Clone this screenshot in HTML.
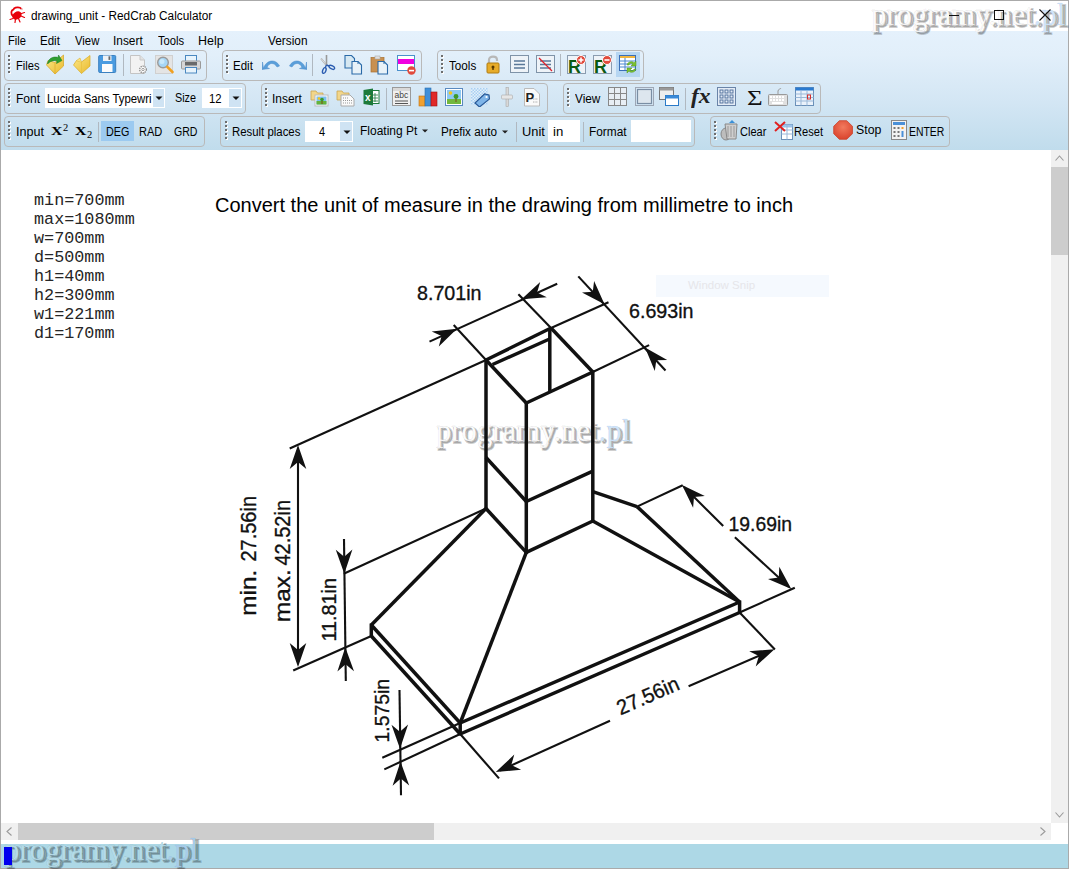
<!DOCTYPE html>
<html><head><meta charset="utf-8">
<style>
*{margin:0;padding:0;box-sizing:border-box}
html,body{width:1069px;height:869px;overflow:hidden;background:#fff;font-family:"Liberation Sans",sans-serif;color:#000}
.a{position:absolute}
#win{position:absolute;left:0;top:0;width:1069px;height:869px;border:1px solid #aaa;background:#fff}
#title{left:30px;top:9px;font-size:12.5px;color:#000;white-space:nowrap;transform:scaleX(0.95);transform-origin:0 0}
#tb{left:1px;top:31px;width:1067px;height:119px;background:linear-gradient(#e5f1fc,#e2effa 20%,#d3e6f4 60%,#c0dcec)}
.menu{top:34px;font-size:12px;white-space:nowrap;transform:scaleX(0.91);transform-origin:0 0}
.box{position:absolute;border:1px solid #b9b9b9;border-radius:4px}
.grip{position:absolute;width:2px;border-left:2px dotted #555;}
.lbl{position:absolute;font-size:12px;white-space:nowrap;color:#000}
.sep{position:absolute;width:1px;background:#b0b8c0}
.ico{position:absolute}
.input{position:absolute;background:#fff}
#content{left:1px;top:150px;width:1050px;height:673px;background:#fff}
.wm{position:absolute;font-family:"Liberation Serif",serif;font-weight:normal;white-space:nowrap;transform-origin:0 0;transform:scaleX(0.975);font-size:31.5px}
.wms{color:rgba(0,0,0,0.21);-webkit-text-stroke:1.8px rgba(0,0,0,0.21)}
.wms span{color:rgba(0,0,0,0.21);-webkit-text-stroke:1.8px rgba(0,0,0,0.21)}
.wmm{color:#fbfbfb;-webkit-text-stroke:0.4px rgba(0,0,0,0.12)}
.wmm span{-webkit-text-stroke:0.4px rgba(60,120,200,0.15)}
.wmm span{color:#d4e6f8}
.mono{color:#262626;font-family:"Liberation Mono",monospace;font-size:16.8px;line-height:18.95px;white-space:pre}
#status{left:1px;top:844px;width:1067px;height:24px;background:#add8e6}
</style></head><body>
<div id="win"></div>
<div class="a" id="tb"></div>

<div class="lbl" style="left:30.50px;top:9.00px;font-size:12.5px;font-family:'Liberation Sans';font-weight:normal;line-height:normal;transform:scaleX(0.9453);transform-origin:0 0;">drawing_unit - RedCrab Calculator</div>
<div class="lbl" style="left:7.77px;top:33.70px;font-size:12px;font-family:'Liberation Sans';font-weight:normal;line-height:normal;transform:scaleX(0.9278);transform-origin:0 0;">File</div>
<div class="lbl" style="left:39.74px;top:33.70px;font-size:12px;font-family:'Liberation Sans';font-weight:normal;line-height:normal;transform:scaleX(0.9600);transform-origin:0 0;">Edit</div>
<div class="lbl" style="left:74.60px;top:33.70px;font-size:12px;font-family:'Liberation Sans';font-weight:normal;line-height:normal;transform:scaleX(0.9423);transform-origin:0 0;">View</div>
<div class="lbl" style="left:112.81px;top:33.70px;font-size:12px;font-family:'Liberation Sans';font-weight:normal;line-height:normal;transform:scaleX(0.9897);transform-origin:0 0;">Insert</div>
<div class="lbl" style="left:157.50px;top:33.70px;font-size:12px;font-family:'Liberation Sans';font-weight:normal;line-height:normal;transform:scaleX(0.9357);transform-origin:0 0;">Tools</div>
<div class="lbl" style="left:197.66px;top:33.70px;font-size:12px;font-family:'Liberation Sans';font-weight:normal;line-height:normal;transform:scaleX(1.0391);transform-origin:0 0;">Help</div>
<div class="lbl" style="left:267.50px;top:33.70px;font-size:12px;font-family:'Liberation Sans';font-weight:normal;line-height:normal;transform:scaleX(0.9872);transform-origin:0 0;">Version</div>
<div class="box" style="left:4px;top:50px;width:203px;height:31px"></div>
<div class="box" style="left:222px;top:50px;width:200px;height:31px"></div>
<div class="box" style="left:437px;top:50px;width:207px;height:31px"></div>
<svg class="a" style="left:8px;top:55px" width="3" height="19" viewBox="0 0 3 19"><rect x="1" y="1" width="2" height="2" fill="#fff"/><rect x="0" y="0" width="2" height="2" fill="#6e6e6e"/><rect x="1" y="5" width="2" height="2" fill="#fff"/><rect x="0" y="4" width="2" height="2" fill="#6e6e6e"/><rect x="1" y="9" width="2" height="2" fill="#fff"/><rect x="0" y="8" width="2" height="2" fill="#6e6e6e"/><rect x="1" y="13" width="2" height="2" fill="#fff"/><rect x="0" y="12" width="2" height="2" fill="#6e6e6e"/><rect x="1" y="17" width="2" height="2" fill="#fff"/><rect x="0" y="16" width="2" height="2" fill="#6e6e6e"/></svg>
<div class="lbl" style="left:15.77px;top:58.90px;font-size:12px;font-family:'Liberation Sans';font-weight:normal;line-height:normal;transform:scaleX(0.9250);transform-origin:0 0;">Files</div>
<svg class="a" style="left:46px;top:54px" width="20" height="21" viewBox="0 0 20 21"><defs><linearGradient id="fy" x1="0" y1="0" x2="1" y2="1"><stop offset="0" stop-color="#fde98a"/><stop offset="1" stop-color="#e9b92c"/></linearGradient></defs><path d="M0.5 11 L9 20 L17.5 12 V1 L9 8.5 L2 6.5Z" fill="url(#fy)" stroke="#d4a21e" stroke-width="0.7"/><path d="M9 8.5 V20" stroke="#e0b030" stroke-width="0.8"/><path d="M1.5 10 C2 4 8 2 12 3.5 L12.5 1 L16 6.5 L10.5 9.5 L11 7 C8 6 4 7 1.5 10Z" fill="#2e9e32" stroke="#1d7a22" stroke-width="0.5"/></svg>
<svg class="a" style="left:73px;top:55px" width="18" height="19" viewBox="0 0 18 19"><path d="M0.5 10 L8.5 18.5 L17 11 V0.5 L8.5 7 L3.5 5.5Z" fill="url(#fy)" stroke="#d9ab22" stroke-width="0.7"/><path d="M8.5 7 V18.5" stroke="#e8c040" stroke-width="0.8"/><path d="M3.5 5.5 L7 3 L8.5 7" fill="#fbe27a" stroke="#d9ab22" stroke-width="0.5"/></svg>
<svg class="a" style="left:98px;top:55px" width="19" height="19" viewBox="0 0 19 19"><rect x="0.7" y="0.5" width="17" height="17" rx="1" fill="#4a9be0" stroke="#3a80c0"/><rect x="5" y="0.5" width="8.5" height="5.5" fill="#eef2f6"/><rect x="10.5" y="1.3" width="1.8" height="3.6" fill="#666"/><rect x="4" y="9" width="10.5" height="8" fill="#fbfbfb"/></svg>
<div class="sep" style="left:123px;top:54px;height:22px"></div>
<svg class="a" style="left:130px;top:55px" width="19" height="20" viewBox="0 0 19 20"><path d="M0.5 0.5 H10 L14.5 5 V18.5 H0.5Z" fill="#f2f2f2" stroke="#c4c4c4"/><path d="M10 0.5 V5 H14.5" fill="#e2e2e2" stroke="#c8c8c8"/><circle cx="13" cy="14.5" r="3.3" fill="#fff" stroke="#8a8a8a" stroke-width="1.3" stroke-dasharray="1.3 0.8"/><circle cx="13" cy="14.5" r="1.2" fill="none" stroke="#888" stroke-width="0.8"/></svg>
<svg class="a" style="left:155px;top:55px" width="20" height="20" viewBox="0 0 20 20"><rect x="0.5" y="0.5" width="17" height="18" fill="#e4e4e4" stroke="#d0d0d0"/><circle cx="8" cy="7.5" r="5.3" fill="#a6d6f6" stroke="#9a9a9a" stroke-width="1.4"/><circle cx="7" cy="6.5" r="2.5" fill="#c8e8fb"/><path d="M12.3 11.8 L17.5 17" stroke="#f0a020" stroke-width="2.6" stroke-linecap="round"/></svg>
<svg class="a" style="left:181px;top:55px" width="20" height="19" viewBox="0 0 20 19"><rect x="4.5" y="0.5" width="11" height="6" fill="#e8f4fc" stroke="#4a88c0"/><rect x="0.5" y="6" width="19" height="8" rx="1" fill="#d6d6d6" stroke="#9a9a9a"/><rect x="4" y="7" width="12" height="3.5" fill="#6a6a6a"/><rect x="4.5" y="12.5" width="11" height="5.5" fill="#e8f4fc" stroke="#4a88c0"/></svg>
<svg class="a" style="left:226px;top:55px" width="3" height="19" viewBox="0 0 3 19"><rect x="1" y="1" width="2" height="2" fill="#fff"/><rect x="0" y="0" width="2" height="2" fill="#6e6e6e"/><rect x="1" y="5" width="2" height="2" fill="#fff"/><rect x="0" y="4" width="2" height="2" fill="#6e6e6e"/><rect x="1" y="9" width="2" height="2" fill="#fff"/><rect x="0" y="8" width="2" height="2" fill="#6e6e6e"/><rect x="1" y="13" width="2" height="2" fill="#fff"/><rect x="0" y="12" width="2" height="2" fill="#6e6e6e"/><rect x="1" y="17" width="2" height="2" fill="#fff"/><rect x="0" y="16" width="2" height="2" fill="#6e6e6e"/></svg>
<div class="lbl" style="left:233.24px;top:58.90px;font-size:12px;font-family:'Liberation Sans';font-weight:normal;line-height:normal;transform:scaleX(0.9600);transform-origin:0 0;">Edit</div>
<svg class="a" style="left:262px;top:58px" width="19" height="12" viewBox="0 0 19 12"><path d="M1.5 10.5 C4 1.5 14 0.5 17.5 8 L15 9 C12 4 7 4.5 5 9.5 L7.5 10.5 L0 11.5 L0.5 4Z" fill="#5a9fda" stroke="#4a88c8" stroke-width="0.5"/></svg>
<svg class="a" style="left:288px;top:58px" width="19" height="12" viewBox="0 0 19 12"><path d="M17.5 10.5 C15 1.5 5 0.5 1.5 8 L4 9 C7 4 12 4.5 14 9.5 L11.5 10.5 L19 11.5 L18.5 4Z" fill="#5a9fda" stroke="#4a88c8" stroke-width="0.5"/></svg>
<div class="sep" style="left:312px;top:54px;height:22px"></div>
<svg class="a" style="left:319px;top:55px" width="17" height="20" viewBox="0 0 17 20"><path d="M2 3.5 L7.5 10.2" stroke="#aaa" stroke-width="1.8"/><path d="M2 3.5 L7.5 10.2" stroke="#fff" stroke-width="0.6"/><path d="M7.5 0 V10.5" stroke="#999" stroke-width="1.6"/><path d="M7.5 10 L6 13" stroke="#2a5cb0" stroke-width="1.4"/><ellipse cx="5.3" cy="15.5" rx="1.6" ry="3" transform="rotate(20 5.3 15.5)" fill="none" stroke="#2a5cb0" stroke-width="1.4"/><path d="M7.5 10 L10 11" stroke="#2a5cb0" stroke-width="1.4"/><ellipse cx="12.8" cy="12.3" rx="3" ry="1.6" transform="rotate(28 12.8 12.3)" fill="none" stroke="#2a5cb0" stroke-width="1.4"/></svg>
<svg class="a" style="left:344px;top:55px" width="20" height="20" viewBox="0 0 20 20"><path d="M1 0.5 H7.5 L10.5 3.5 V13 H1Z" fill="#d6e8f2" stroke="#2a6aa8" stroke-width="1.1"/><path d="M8 6.5 H14 L17.5 10 V19 H8Z" fill="#e8f2f8" stroke="#2a6aa8" stroke-width="1.1"/><path d="M14 6.5 V9" stroke="#2a6aa8"/></svg>
<svg class="a" style="left:370px;top:55px" width="21" height="20" viewBox="0 0 21 20"><rect x="1" y="2.5" width="13" height="14.5" fill="#c89050" stroke="#a87030" stroke-width="0.7"/><rect x="5" y="1" width="5" height="3" fill="#e0e0e0" stroke="#aaa" stroke-width="0.6"/><path d="M8 6.5 H14 L17.5 10 V19 H8Z" fill="#e8f2f8" stroke="#2a6aa8" stroke-width="1.1"/><path d="M14 6.5 V9" stroke="#2a6aa8"/></svg>
<svg class="a" style="left:397px;top:55px" width="20" height="21" viewBox="0 0 20 21"><rect x="0.5" y="0.5" width="17" height="15" fill="#fff" stroke="#4a90cc"/><rect x="1" y="4" width="16" height="5" fill="#f000e0"/><circle cx="14.5" cy="15.5" r="4.2" fill="#e14a3c"/><rect x="12" y="14.8" width="5" height="1.6" fill="#fff"/></svg>
<svg class="a" style="left:441px;top:55px" width="3" height="19" viewBox="0 0 3 19"><rect x="1" y="1" width="2" height="2" fill="#fff"/><rect x="0" y="0" width="2" height="2" fill="#6e6e6e"/><rect x="1" y="5" width="2" height="2" fill="#fff"/><rect x="0" y="4" width="2" height="2" fill="#6e6e6e"/><rect x="1" y="9" width="2" height="2" fill="#fff"/><rect x="0" y="8" width="2" height="2" fill="#6e6e6e"/><rect x="1" y="13" width="2" height="2" fill="#fff"/><rect x="0" y="12" width="2" height="2" fill="#6e6e6e"/><rect x="1" y="17" width="2" height="2" fill="#fff"/><rect x="0" y="16" width="2" height="2" fill="#6e6e6e"/></svg>
<div class="lbl" style="left:449.00px;top:59.10px;font-size:12px;font-family:'Liberation Sans';font-weight:normal;line-height:normal;transform:scaleX(0.9750);transform-origin:0 0;">Tools</div>
<svg class="a" style="left:486px;top:55px" width="14" height="19" viewBox="0 0 14 19"><path d="M3 8.5 V5 C3 0.5 11 0.5 11 5 V6" fill="none" stroke="#b8b8b8" stroke-width="2.2"/><rect x="1" y="8" width="12" height="10" rx="1" fill="#e7ac2a" stroke="#b07d12"/><circle cx="7" cy="12" r="1.5" fill="#5a3a00"/><rect x="6.3" y="12" width="1.4" height="3" fill="#5a3a00"/></svg>
<svg class="a" style="left:510px;top:55px" width="20" height="19" viewBox="0 0 20 19"><rect x="0.5" y="0.5" width="18" height="17" fill="#eef3f8" stroke="#7f93a8"/><path d="M4 6 H15 M4 9.5 H15 M4 13 H15" stroke="#5a7898" stroke-width="1.5"/></svg>
<svg class="a" style="left:536px;top:55px" width="20" height="19" viewBox="0 0 20 19"><rect x="0.5" y="0.5" width="18" height="17" fill="#eef3f8" stroke="#7f93a8"/><path d="M4 6 H15 M4 9.5 H15 M4 13 H15" stroke="#5a7898" stroke-width="1.5"/><path d="M3 3 L16 16" stroke="#e0202a" stroke-width="1.3"/></svg>
<div class="sep" style="left:560px;top:54px;height:22px"></div>
<svg class="a" style="left:567px;top:55px" width="19" height="19" viewBox="0 0 19 19"><rect x="0.5" y="0.5" width="18" height="18" fill="#eef3f8" stroke="#8a9cb0"/><text x="1" y="17.5" font-family="Liberation Sans" font-weight="bold" font-size="18" fill="#0b5a12">R</text><circle cx="14" cy="5" r="4.5" fill="#e14a3c" stroke="#fff"/><path d="M14 2.5 V7.5 M11.5 5 H16.5" stroke="#fff" stroke-width="1.6"/></svg>
<svg class="a" style="left:593px;top:55px" width="19" height="19" viewBox="0 0 19 19"><rect x="0.5" y="0.5" width="18" height="18" fill="#eef3f8" stroke="#8a9cb0"/><text x="1" y="17.5" font-family="Liberation Sans" font-weight="bold" font-size="18" fill="#0b5a12">R</text><circle cx="14" cy="5" r="4.5" fill="#e14a3c" stroke="#fff"/><path d="M11.5 5 H16.5" stroke="#fff" stroke-width="1.6"/></svg>
<div class="a" style="left:616px;top:52px;width:24px;height:25px;background:#b6d6f2"></div>
<svg class="a" style="left:619px;top:55px" width="19" height="20" viewBox="0 0 19 20"><rect x="0.5" y="0.5" width="16" height="15" fill="#fff" stroke="#3a6fb8"/><rect x="1" y="1" width="15" height="2" fill="#f2b640"/><path d="M1 6 H16 M1 9 H16 M1 12 H16 M6 3 V15" stroke="#4b86cf" stroke-width="1"/><path d="M8 10 C9 6 14 6 15 8 L17 6 V11 H12 L14 9 C13 8 10 8 10 10Z M17 14 C16 18 11 18 10 16 L8 18 V13 H13 L11 15 C12 16 15 16 15 14Z" fill="#7cc230" stroke="#4e9418" stroke-width="0.5"/></svg>
<div class="box" style="left:4px;top:83px;width:242px;height:31px"></div>
<div class="box" style="left:261px;top:83px;width:287px;height:31px"></div>
<div class="box" style="left:563px;top:83px;width:258px;height:31px"></div>
<svg class="a" style="left:8px;top:88px" width="3" height="19" viewBox="0 0 3 19"><rect x="1" y="1" width="2" height="2" fill="#fff"/><rect x="0" y="0" width="2" height="2" fill="#6e6e6e"/><rect x="1" y="5" width="2" height="2" fill="#fff"/><rect x="0" y="4" width="2" height="2" fill="#6e6e6e"/><rect x="1" y="9" width="2" height="2" fill="#fff"/><rect x="0" y="8" width="2" height="2" fill="#6e6e6e"/><rect x="1" y="13" width="2" height="2" fill="#fff"/><rect x="0" y="12" width="2" height="2" fill="#6e6e6e"/><rect x="1" y="17" width="2" height="2" fill="#fff"/><rect x="0" y="16" width="2" height="2" fill="#6e6e6e"/></svg>
<div class="lbl" style="left:15.70px;top:91.60px;font-size:12px;font-family:'Liberation Sans';font-weight:normal;line-height:normal;transform:scaleX(1.0043);transform-origin:0 0;">Font</div>
<div class="input" style="left:45px;top:88px;width:108px;height:20px"></div>
<div class="lbl" style="left:46.75px;top:92.10px;font-size:12px;font-family:'Liberation Sans';font-weight:normal;line-height:normal;transform:scaleX(0.9468);transform-origin:0 0;">Lucida Sans Typewri</div>
<div class="a" style="left:153px;top:88px;width:12px;height:20px;background:#cfe3f3;border:1px solid #fff;border-left:none"></div>
<svg class="a" style="left:155.0px;top:96.0px" width="8" height="4" viewBox="0 0 8 4"><path d="M0.5 0.5H7.5L4 4Z" fill="#111"/></svg>
<div class="lbl" style="left:175.10px;top:90.50px;font-size:12px;font-family:'Liberation Sans';font-weight:normal;line-height:normal;transform:scaleX(0.9000);transform-origin:0 0;">Size</div>
<div class="input" style="left:202px;top:88px;width:28px;height:20px"></div>
<div class="lbl" style="left:209.46px;top:92.00px;font-size:12px;font-family:'Liberation Sans';font-weight:normal;line-height:normal;transform:scaleX(0.9417);transform-origin:0 0;">12</div>
<div class="a" style="left:229px;top:88px;width:13px;height:20px;background:#cfe3f3;border:1px solid #fff;border-left:none"></div>
<svg class="a" style="left:231.5px;top:96.0px" width="8" height="4" viewBox="0 0 8 4"><path d="M0.5 0.5H7.5L4 4Z" fill="#111"/></svg>
<svg class="a" style="left:265px;top:88px" width="3" height="19" viewBox="0 0 3 19"><rect x="1" y="1" width="2" height="2" fill="#fff"/><rect x="0" y="0" width="2" height="2" fill="#6e6e6e"/><rect x="1" y="5" width="2" height="2" fill="#fff"/><rect x="0" y="4" width="2" height="2" fill="#6e6e6e"/><rect x="1" y="9" width="2" height="2" fill="#fff"/><rect x="0" y="8" width="2" height="2" fill="#6e6e6e"/><rect x="1" y="13" width="2" height="2" fill="#fff"/><rect x="0" y="12" width="2" height="2" fill="#6e6e6e"/><rect x="1" y="17" width="2" height="2" fill="#fff"/><rect x="0" y="16" width="2" height="2" fill="#6e6e6e"/></svg>
<div class="lbl" style="left:272.21px;top:91.70px;font-size:12px;font-family:'Liberation Sans';font-weight:normal;line-height:normal;transform:scaleX(0.9931);transform-origin:0 0;">Insert</div>
<svg class="a" style="left:310px;top:88px" width="19" height="19" viewBox="0 0 19 19"><path d="M1 3 H6 L7.5 5 H13 V12 H1Z" fill="#f2d68a" stroke="#caa552" stroke-width="0.8"/><rect x="5" y="7" width="13" height="11" fill="#fff" stroke="#bbb"/><rect x="6.5" y="8.5" width="10" height="8" fill="#7cc0ef"/><rect x="6.5" y="13" width="10" height="3.5" fill="#66b23a"/><circle cx="9" cy="10.5" r="1.3" fill="#f5c518"/><path d="M12 16 V12" stroke="#7a4a1a"/><circle cx="12" cy="11.5" r="1.8" fill="#3d9a2b"/></svg>
<svg class="a" style="left:336px;top:88px" width="19" height="19" viewBox="0 0 19 19"><path d="M1 3 H6 L7.5 5 H13 V12 H1Z" fill="#f2d68a" stroke="#caa552" stroke-width="0.8"/><path d="M5 7 H14 L18 11 V18 H5Z" fill="#fafafa" stroke="#aaa"/><path d="M7 10 H13 M7 12.5 H16 M7 15 H16" stroke="#999" stroke-dasharray="1 1"/></svg>
<svg class="a" style="left:363px;top:88px" width="17" height="18" viewBox="0 0 17 18"><rect x="6" y="2.5" width="10" height="13" fill="#fff" stroke="#1f7a3c"/><path d="M9 5 V14 M12 5 V14 M7 7 H15 M7 10 H15 M7 13 H15" stroke="#1f7a3c" stroke-width="0.8"/><path d="M0.5 2 L10 0.5 V17.5 L0.5 16Z" fill="#1d7a3a"/><text x="2" y="13" font-family="Liberation Sans" font-weight="bold" font-size="10" fill="#fff">x</text></svg>
<div class="sep" style="left:386px;top:88px;height:22px"></div>
<svg class="a" style="left:392px;top:87px" width="20" height="20" viewBox="0 0 20 20"><rect x="0.5" y="0.5" width="18" height="18" fill="#f0f0f0" stroke="#9a9a9a"/><rect x="1" y="1" width="17" height="3" fill="#d9d9d9"/><text x="2.5" y="11" font-family="Liberation Sans" font-size="8.5" fill="#444">abc</text><path d="M3 14 H16 M3 16.5 H16" stroke="#555" stroke-width="1"/></svg>
<svg class="a" style="left:418px;top:86px" width="21" height="21" viewBox="0 0 21 21"><rect x="1" y="10" width="6" height="10" fill="#f0a030" stroke="#c07010" stroke-width="0.6"/><rect x="7" y="2" width="6" height="18" fill="#3f8fd8" stroke="#2a6fb0" stroke-width="0.6"/><rect x="13" y="6" width="6" height="14" fill="#e02828" stroke="#a01010" stroke-width="0.6"/></svg>
<svg class="a" style="left:445px;top:88px" width="18" height="18" viewBox="0 0 18 18"><rect x="0.5" y="0.5" width="17" height="17" fill="#fff" stroke="#5a8ac0"/><rect x="2" y="2" width="14" height="14" fill="#8ec9f2"/><rect x="2" y="11" width="14" height="5" fill="#72b83e"/><circle cx="5.5" cy="5" r="1.8" fill="#f5c518"/><path d="M11 14 V9" stroke="#7a4a1a"/><circle cx="11" cy="8.5" r="2.4" fill="#3d9a2b"/></svg>
<svg class="a" style="left:471px;top:88px" width="19" height="19" viewBox="0 0 19 19"><defs><pattern id="chk" width="3" height="3" patternUnits="userSpaceOnUse"><rect width="3" height="3" fill="#e4f0fb"/><rect width="1.5" height="1.5" fill="#a9d0f2"/><rect x="1.5" y="1.5" width="1.5" height="1.5" fill="#a9d0f2"/></pattern></defs><rect x="0" y="0" width="17" height="17" fill="url(#chk)"/><path d="M4 15 L13.5 6 L18 7 L18.5 11 L8.5 19 Z" fill="#7eb4e8" stroke="#2a5a98" stroke-width="1.2"/><circle cx="15.5" cy="9" r="1.1" fill="#fff"/></svg>
<svg class="a" style="left:501px;top:87px" width="12" height="20" viewBox="0 0 12 20"><rect x="5" y="0.5" width="2.5" height="19" fill="#d8d8d8" stroke="#aaa" stroke-width="0.6"/><rect x="0.5" y="8" width="11" height="4" rx="1" fill="#e6e6e6" stroke="#aaa" stroke-width="0.6"/></svg>
<svg class="a" style="left:524px;top:87px" width="17" height="20" viewBox="0 0 17 20"><path d="M0.5 1.5 H10 L15.5 7 V19 H0.5Z" fill="#fafafa" stroke="#bbb"/><text x="1.5" y="15" font-family="Liberation Sans" font-weight="bold" font-size="13" fill="#222">P</text><path d="M9 12 H14 M9 15 H14" stroke="#999" stroke-width="0.8" stroke-dasharray="1 0.6"/></svg>
<svg class="a" style="left:567px;top:88px" width="3" height="19" viewBox="0 0 3 19"><rect x="1" y="1" width="2" height="2" fill="#fff"/><rect x="0" y="0" width="2" height="2" fill="#6e6e6e"/><rect x="1" y="5" width="2" height="2" fill="#fff"/><rect x="0" y="4" width="2" height="2" fill="#6e6e6e"/><rect x="1" y="9" width="2" height="2" fill="#fff"/><rect x="0" y="8" width="2" height="2" fill="#6e6e6e"/><rect x="1" y="13" width="2" height="2" fill="#fff"/><rect x="0" y="12" width="2" height="2" fill="#6e6e6e"/><rect x="1" y="17" width="2" height="2" fill="#fff"/><rect x="0" y="16" width="2" height="2" fill="#6e6e6e"/></svg>
<div class="lbl" style="left:575.20px;top:91.70px;font-size:12px;font-family:'Liberation Sans';font-weight:normal;line-height:normal;transform:scaleX(0.9808);transform-origin:0 0;">View</div>
<svg class="a" style="left:608px;top:87px" width="20" height="20" viewBox="0 0 20 20"><rect x="0.5" y="0.5" width="18" height="18" fill="#e8eef4" stroke="#888"/><path d="M6.5 0.5 V18.5 M12.5 0.5 V18.5 M0.5 6.5 H18.5 M0.5 12.5 H18.5" stroke="#888"/></svg>
<svg class="a" style="left:635px;top:87px" width="19" height="20" viewBox="0 0 19 20"><rect x="0.5" y="0.5" width="18" height="18" fill="none" stroke="#667" stroke-dasharray="1 1"/><rect x="2.5" y="2.5" width="14" height="14" fill="#dde6ee" stroke="#7a8ea4" stroke-width="1.2"/></svg>
<svg class="a" style="left:659px;top:87px" width="21" height="20" viewBox="0 0 21 20"><rect x="0.5" y="0.5" width="14" height="12" fill="#eee" stroke="#777"/><rect x="0.5" y="0.5" width="14" height="3" fill="#999"/><rect x="6.5" y="8.5" width="13" height="10" fill="#fff" stroke="#2a7ac8"/><rect x="6.5" y="8.5" width="13" height="3" fill="#3a8ad8"/></svg>
<div class="sep" style="left:685px;top:88px;height:22px"></div>
<div class="lbl" style="left:690.5px;top:83.5px;font-size:21px;line-height:normal;transform:scaleX(1.12);transform-origin:0 0;font-family:'Liberation Serif',serif;color:#222"><i><b>fx</b></i></div>
<svg class="a" style="left:717px;top:87px" width="20" height="20" viewBox="0 0 20 20"><rect x="0.5" y="0.5" width="18" height="18" fill="#e4ecf6" stroke="#6a84a8"/><g stroke="#4a6a98" stroke-width="0.9" fill="none"><rect x="3" y="3" width="3" height="3"/><rect x="8" y="3" width="3" height="3"/><rect x="13" y="3" width="3" height="3"/><rect x="3" y="8" width="3" height="3"/><rect x="8" y="8" width="3" height="3"/><rect x="13" y="8" width="3" height="3"/><rect x="3" y="13" width="3" height="3"/><rect x="8" y="13" width="3" height="3"/><rect x="13" y="13" width="3" height="3"/></g></svg>
<div class="lbl" style="left:746.5px;top:86.0px;font-size:21.5px;line-height:normal;transform:scaleX(1.25);transform-origin:0 0;font-family:'Liberation Serif',serif;color:#111">&Sigma;</div>
<svg class="a" style="left:768px;top:88px" width="21" height="19" viewBox="0 0 21 19"><path d="M10 6 V3 C10 1 13 1 13 0" stroke="#999" fill="none"/><rect x="0.5" y="6.5" width="19" height="11" rx="1" fill="#e0e0e0" stroke="#999"/><g fill="#fff"><rect x="2" y="8" width="2" height="2"/><rect x="5" y="8" width="2" height="2"/><rect x="8" y="8" width="2" height="2"/><rect x="11" y="8" width="2" height="2"/><rect x="14" y="8" width="2" height="2"/><rect x="2" y="11" width="2" height="2"/><rect x="5" y="11" width="2" height="2"/><rect x="8" y="11" width="2" height="2"/><rect x="11" y="11" width="2" height="2"/><rect x="14" y="11" width="2" height="2"/><rect x="4" y="14" width="11" height="2"/></g></svg>
<svg class="a" style="left:795px;top:87px" width="20" height="20" viewBox="0 0 20 20"><rect x="0.5" y="0.5" width="18" height="18" fill="#eaf2fb" stroke="#6a90b8"/><rect x="0.5" y="0.5" width="18" height="3" fill="#2a7ad0"/><path d="M0.5 7 H18.5 M0.5 10.5 H18.5 M0.5 14 H18.5 M6 3.5 V18.5 M12 3.5 V18.5" stroke="#9ab8d8"/><rect x="12.5" y="8" width="3" height="4" fill="none" stroke="#d03030"/></svg>
<div class="box" style="left:4px;top:116px;width:201px;height:31px"></div>
<div class="box" style="left:220px;top:116px;width:475px;height:31px"></div>
<div class="box" style="left:710px;top:116px;width:240px;height:31px"></div>
<svg class="a" style="left:8px;top:121px" width="3" height="19" viewBox="0 0 3 19"><rect x="1" y="1" width="2" height="2" fill="#fff"/><rect x="0" y="0" width="2" height="2" fill="#6e6e6e"/><rect x="1" y="5" width="2" height="2" fill="#fff"/><rect x="0" y="4" width="2" height="2" fill="#6e6e6e"/><rect x="1" y="9" width="2" height="2" fill="#fff"/><rect x="0" y="8" width="2" height="2" fill="#6e6e6e"/><rect x="1" y="13" width="2" height="2" fill="#fff"/><rect x="0" y="12" width="2" height="2" fill="#6e6e6e"/><rect x="1" y="17" width="2" height="2" fill="#fff"/><rect x="0" y="16" width="2" height="2" fill="#6e6e6e"/></svg>
<div class="lbl" style="left:15.55px;top:124.80px;font-size:12px;font-family:'Liberation Sans';font-weight:normal;line-height:normal;transform:scaleX(1.0500);transform-origin:0 0;">Input</div>
<div class="lbl" style="left:50.8px;top:123.0px;font-size:13px;line-height:normal;transform:scaleX(1.22);transform-origin:0 0;font-family:'Liberation Serif',serif"><b>X</b></div>
<div class="lbl" style="left:63px;top:121.5px;font-size:10.5px;line-height:normal;transform:scaleX(1);transform-origin:0 0;font-family:'Liberation Serif',serif">2</div>
<div class="lbl" style="left:75.2px;top:123.0px;font-size:13px;line-height:normal;transform:scaleX(1.22);transform-origin:0 0;font-family:'Liberation Serif',serif"><b>X</b></div>
<div class="lbl" style="left:87px;top:129.2px;font-size:10.5px;line-height:normal;transform:scaleX(1);transform-origin:0 0;font-family:'Liberation Serif',serif">2</div>
<div class="sep" style="left:98px;top:122px;height:20px"></div>
<div class="a" style="left:101px;top:121px;width:33px;height:20px;background:#9ccaf0"></div>
<div class="lbl" style="left:106.10px;top:124.80px;font-size:12px;font-family:'Liberation Sans';font-weight:normal;line-height:normal;transform:scaleX(0.8958);transform-origin:0 0;">DEG</div>
<div class="lbl" style="left:139.18px;top:124.80px;font-size:12px;font-family:'Liberation Sans';font-weight:normal;line-height:normal;transform:scaleX(0.9208);transform-origin:0 0;">RAD</div>
<div class="lbl" style="left:173.90px;top:124.80px;font-size:12px;font-family:'Liberation Sans';font-weight:normal;line-height:normal;transform:scaleX(0.8808);transform-origin:0 0;">GRD</div>
<svg class="a" style="left:225px;top:121px" width="3" height="19" viewBox="0 0 3 19"><rect x="1" y="1" width="2" height="2" fill="#fff"/><rect x="0" y="0" width="2" height="2" fill="#6e6e6e"/><rect x="1" y="5" width="2" height="2" fill="#fff"/><rect x="0" y="4" width="2" height="2" fill="#6e6e6e"/><rect x="1" y="9" width="2" height="2" fill="#fff"/><rect x="0" y="8" width="2" height="2" fill="#6e6e6e"/><rect x="1" y="13" width="2" height="2" fill="#fff"/><rect x="0" y="12" width="2" height="2" fill="#6e6e6e"/><rect x="1" y="17" width="2" height="2" fill="#fff"/><rect x="0" y="16" width="2" height="2" fill="#6e6e6e"/></svg>
<div class="lbl" style="left:232.15px;top:125.00px;font-size:12px;font-family:'Liberation Sans';font-weight:normal;line-height:normal;transform:scaleX(0.9493);transform-origin:0 0;">Result places</div>
<div class="input" style="left:305px;top:121px;width:36px;height:21px"></div>
<div class="lbl" style="left:319.30px;top:125.00px;font-size:12px;font-family:'Liberation Sans';font-weight:normal;line-height:normal;transform:scaleX(0.9143);transform-origin:0 0;">4</div>
<div class="a" style="left:340px;top:121px;width:13px;height:21px;background:#cfe3f3;border:1px solid #fff;border-left:none"></div>
<svg class="a" style="left:342.5px;top:129.5px" width="8" height="4" viewBox="0 0 8 4"><path d="M0.5 0.5H7.5L4 4Z" fill="#111"/></svg>
<div class="lbl" style="left:360.40px;top:123.80px;font-size:12px;font-family:'Liberation Sans';font-weight:normal;line-height:normal;transform:scaleX(0.9982);transform-origin:0 0;">Floating Pt</div>
<svg class="a" style="left:422px;top:129px" width="6" height="4" viewBox="0 0 6 4"><path d="M0 0.5H6L3 3.5Z" fill="#222"/></svg>
<div class="lbl" style="left:440.72px;top:124.70px;font-size:12px;font-family:'Liberation Sans';font-weight:normal;line-height:normal;transform:scaleX(0.9768);transform-origin:0 0;">Prefix auto</div>
<svg class="a" style="left:502px;top:130px" width="6" height="4" viewBox="0 0 6 4"><path d="M0 0.5H6L3 3.5Z" fill="#222"/></svg>
<div class="sep" style="left:516px;top:122px;height:20px"></div>
<div class="lbl" style="left:521.53px;top:124.70px;font-size:12px;font-family:'Liberation Sans';font-weight:normal;line-height:normal;transform:scaleX(1.0700);transform-origin:0 0;">Unit</div>
<div class="input" style="left:548px;top:120px;width:32px;height:22px"></div>
<div class="lbl" style="left:552.60px;top:124.70px;font-size:12px;font-family:'Liberation Sans';font-weight:normal;line-height:normal;transform:scaleX(1.1000);transform-origin:0 0;">in</div>
<div class="sep" style="left:583px;top:122px;height:20px"></div>
<div class="lbl" style="left:589.41px;top:124.70px;font-size:12px;font-family:'Liberation Sans';font-weight:normal;line-height:normal;transform:scaleX(0.9892);transform-origin:0 0;">Format</div>
<div class="input" style="left:631px;top:120px;width:60px;height:22px"></div>
<svg class="a" style="left:714px;top:121px" width="3" height="19" viewBox="0 0 3 19"><rect x="1" y="1" width="2" height="2" fill="#fff"/><rect x="0" y="0" width="2" height="2" fill="#6e6e6e"/><rect x="1" y="5" width="2" height="2" fill="#fff"/><rect x="0" y="4" width="2" height="2" fill="#6e6e6e"/><rect x="1" y="9" width="2" height="2" fill="#fff"/><rect x="0" y="8" width="2" height="2" fill="#6e6e6e"/><rect x="1" y="13" width="2" height="2" fill="#fff"/><rect x="0" y="12" width="2" height="2" fill="#6e6e6e"/><rect x="1" y="17" width="2" height="2" fill="#fff"/><rect x="0" y="16" width="2" height="2" fill="#6e6e6e"/></svg>
<svg class="a" style="left:720px;top:120px" width="20" height="21" viewBox="0 0 20 21"><ellipse cx="6" cy="14" rx="5" ry="6" fill="#bdbdbd" stroke="#888"/><path d="M5 4 H17 L16 19 H7Z" fill="#cfcfcf" stroke="#888"/><path d="M8 6 V17 M11 6 V17 M14 6 V17" stroke="#999"/><path d="M9 3 L12 0 L15 3Z" fill="#3a90d8"/></svg>
<div class="lbl" style="left:740.30px;top:124.70px;font-size:12px;font-family:'Liberation Sans';font-weight:normal;line-height:normal;transform:scaleX(0.9172);transform-origin:0 0;">Clear</div>
<svg class="a" style="left:774px;top:120px" width="21" height="21" viewBox="0 0 21 21"><rect x="7.5" y="4.5" width="11" height="15" fill="#fff" stroke="#6a90b8"/><rect x="7.5" y="4.5" width="11" height="3" fill="#9cc4ea"/><path d="M7.5 10 H18.5 M7.5 14 H18.5 M13 4.5 V19.5" stroke="#9ab8d8"/><path d="M1 2 L11 11 M11 2 L1 11" stroke="#e02020" stroke-width="2"/></svg>
<div class="lbl" style="left:794.07px;top:124.70px;font-size:12px;font-family:'Liberation Sans';font-weight:normal;line-height:normal;transform:scaleX(0.9267);transform-origin:0 0;">Reset</div>
<svg class="a" style="left:833px;top:120px" width="21" height="20" viewBox="0 0 21 20"><defs><radialGradient id="stg" cx="0.5" cy="0.35" r="0.7"><stop offset="0" stop-color="#f27a5e"/><stop offset="1" stop-color="#d8402a"/></radialGradient></defs><path d="M6.3 0.7 H13.7 L19.5 6.3 V13.7 L13.7 19.3 H6.3 L0.7 13.7 V6.3Z" fill="url(#stg)" stroke="#c9452e" stroke-width="0.8"/></svg>
<div class="lbl" style="left:856.27px;top:123.00px;font-size:12px;font-family:'Liberation Sans';font-weight:normal;line-height:normal;transform:scaleX(1.0261);transform-origin:0 0;">Stop</div>
<svg class="a" style="left:891px;top:120px" width="16" height="20" viewBox="0 0 16 20"><rect x="0.5" y="0.5" width="15" height="19" fill="#f2f2f2" stroke="#888"/><rect x="2" y="2" width="12" height="3" fill="#4a90d8"/><g fill="#777"><rect x="2.5" y="7" width="2" height="2"/><rect x="6.5" y="7" width="2" height="2"/><rect x="2.5" y="11" width="2" height="2"/><rect x="6.5" y="11" width="2" height="2"/><rect x="2.5" y="15" width="2" height="2"/><rect x="6.5" y="15" width="2" height="2"/></g><rect x="10.5" y="7" width="2" height="2" fill="#f0a030"/><rect x="10.5" y="11" width="2" height="6" fill="#4a90d8"/></svg>
<div class="lbl" style="left:909.13px;top:125.00px;font-size:12px;font-family:'Liberation Sans';font-weight:normal;line-height:normal;transform:scaleX(0.8667);transform-origin:0 0;">ENTER</div>
<div class="a" id="content"></div>
<div class="a mono" style="left:34px;top:192px">min=700mm
max=1080mm
w=700mm
d=500mm
h1=40mm
h2=300mm
w1=221mm
d1=170mm</div>
<div class="a" style="left:215px;top:194px;font-size:20px;white-space:nowrap">Convert the unit of measure in the drawing from millimetre to inch</div>

<div class="wm wms" style="left:438px;top:415px">programy.net<span>.pl</span></div>
<div class="wm wmm" style="left:435.5px;top:412.5px;color:#fbfbfb">programy.net<span style="color:#d0e4f8">.pl</span></div>
<svg class="a" style="left:0;top:0" width="1069" height="869" viewBox="0 0 1069 869">
<g stroke="#111" stroke-width="3.5" stroke-linecap="butt" fill="none">
<line x1="486" y1="360" x2="551" y2="328"/>
<line x1="486" y1="360" x2="526.3" y2="403"/>
<line x1="551" y1="328" x2="592.8" y2="372"/>
<line x1="526.3" y1="403" x2="592.8" y2="372"/>
<line x1="492.5" y1="364.5" x2="549.5" y2="339"/>
<line x1="549.8" y1="330" x2="549.8" y2="391.5"/>
<line x1="486" y1="358.5" x2="486" y2="510"/>
<line x1="526.3" y1="401.5" x2="526.3" y2="554"/>
<line x1="592.8" y1="370.5" x2="592.8" y2="522.5"/>
<line x1="486" y1="457.5" x2="526.3" y2="501.5"/>
<line x1="526.3" y1="501.5" x2="592.8" y2="471.2"/>
<line x1="486" y1="508.5" x2="526.3" y2="552.4"/>
<line x1="526.3" y1="552.4" x2="592.8" y2="521"/>
<line x1="486" y1="508.5" x2="371.3" y2="625"/>
<line x1="526.3" y1="552.4" x2="460.2" y2="723"/>
<line x1="592.8" y1="521" x2="739.6" y2="602"/>
<line x1="592.8" y1="491.6" x2="637" y2="506.6"/>
<line x1="637" y1="506.6" x2="739.6" y2="602"/>
<line x1="371.3" y1="623.5" x2="371.3" y2="637"/>
<line x1="460.2" y1="721.5" x2="460.2" y2="735.5"/>
<line x1="739.6" y1="600.5" x2="739.6" y2="614"/>
<line x1="371.3" y1="625" x2="460.2" y2="723"/>
<line x1="371.3" y1="636" x2="460.2" y2="734"/>
<line x1="460.2" y1="723" x2="739.6" y2="602"/>
<line x1="460.2" y1="734" x2="739.6" y2="612.5"/>
</g><g stroke="#111" stroke-width="2.1" fill="none">
<line x1="453.7" y1="325" x2="486" y2="360"/>
<line x1="518.4" y1="294.2" x2="551" y2="328"/>
<line x1="429.5" y1="341.6" x2="557.2" y2="283.8"/>
<line x1="551" y1="328" x2="608.5" y2="302.3"/>
<line x1="592.8" y1="372" x2="649.1" y2="345.1"/>
<line x1="578.3" y1="276.4" x2="665.5" y2="370.5"/>
<line x1="486" y1="360" x2="289.7" y2="448.5"/>
<line x1="298" y1="450" x2="298" y2="662"/>
<line x1="293.2" y1="670.5" x2="371.3" y2="636"/>
<line x1="486" y1="508.5" x2="343.7" y2="573.7"/>
<line x1="344" y1="539" x2="345.8" y2="681"/>
<line x1="460.2" y1="723" x2="382.3" y2="757.7"/>
<line x1="460.2" y1="734" x2="384.3" y2="769.4"/>
<line x1="399.5" y1="690" x2="401" y2="795.3"/>
<line x1="637" y1="506.6" x2="682.7" y2="485.2"/>
<line x1="739.6" y1="612.5" x2="794.8" y2="587.7"/>
<line x1="684" y1="487" x2="723.2" y2="526.1"/>
<line x1="734.9" y1="537.3" x2="789" y2="587"/>
<line x1="460.2" y1="734" x2="499" y2="778.4"/>
<line x1="739.6" y1="612.5" x2="774.9" y2="649.5"/>
<line x1="500" y1="770.5" x2="610" y2="720.8"/>
<line x1="688.6" y1="686.3" x2="770" y2="651"/>
</g><g fill="#111">
<polygon points="457.0,328.7 438.8,346.4 441.6,335.9 431.7,331.4"/>
<polygon points="521.5,299.2 540.2,282.1 537.1,292.5 546.8,297.3"/>
<polygon points="604.5,304.2 582.0,292.4 592.8,291.8 594.1,281.0"/>
<polygon points="645.0,347.5 667.2,359.9 656.3,360.2 654.8,370.9"/>
<polygon points="298.0,445.0 306.3,469.0 298.0,462.0 289.7,469.0"/>
<polygon points="298.0,667.0 289.7,643.0 298.0,650.0 306.3,643.0"/>
<polygon points="344.3,573.7 335.8,549.8 344.2,556.7 352.4,549.6"/>
<polygon points="345.3,647.3 354.0,671.2 345.6,664.3 337.4,671.4"/>
<polygon points="400.0,748.7 391.5,724.8 399.9,731.7 408.1,724.6"/>
<polygon points="400.5,761.6 409.2,785.5 400.8,778.6 392.6,785.7"/>
<polygon points="682.0,485.0 704.8,496.1 694.0,497.0 693.1,507.8"/>
<polygon points="791.3,589.1 768.0,578.9 778.8,577.6 779.3,566.7"/>
<polygon points="495.8,772.0 514.3,754.6 511.3,765.0 521.1,769.8"/>
<polygon points="774.5,649.3 755.7,666.4 758.9,656.0 749.2,651.2"/>
</g>
<g fill="#111" stroke="#111" stroke-width="0.35" font-family="Liberation Sans" >
<text x="417" y="299.8" font-size="21" textLength="64.5" lengthAdjust="spacingAndGlyphs">8.701in</text>
<text x="629" y="317.6" font-size="21" textLength="64.5" lengthAdjust="spacingAndGlyphs">6.693in</text>
<text x="728.5" y="530.8" font-size="21" textLength="63.5" lengthAdjust="spacingAndGlyphs">19.69in</text>
<text x="256" y="615.8" font-size="22.5" textLength="46" lengthAdjust="spacingAndGlyphs" transform="rotate(-90 256 615.8)" xml:space="preserve">min.</text>
<text x="256" y="561.5" font-size="22.5" textLength="65.5" lengthAdjust="spacingAndGlyphs" transform="rotate(-90 256 561.5)" xml:space="preserve">27.56in</text>
<text x="290" y="622.2" font-size="22.5" textLength="53" lengthAdjust="spacingAndGlyphs" transform="rotate(-90 290 622.2)" xml:space="preserve">max.</text>
<text x="290" y="565.5" font-size="22.5" textLength="65.5" lengthAdjust="spacingAndGlyphs" transform="rotate(-90 290 565.5)" xml:space="preserve">42.52in</text>
<text x="336" y="641.5" font-size="21" textLength="63.5" lengthAdjust="spacingAndGlyphs" transform="rotate(-90 336 641.5)" xml:space="preserve">11.81in</text>
<text x="389.3" y="742.5" font-size="21" textLength="63.5" lengthAdjust="spacingAndGlyphs" transform="rotate(-90 389.3 742.5)" xml:space="preserve">1.575in</text>
<text x="620.5" y="715.5" font-size="21" textLength="66" lengthAdjust="spacingAndGlyphs" transform="rotate(-23.8 620.5 715.5)">27.56in</text>
</g></svg>
<svg class="a" style="left:8px;top:6px" width="18" height="18" viewBox="0 0 18 18"><g fill="#e8000a" stroke="#e8000a" stroke-linecap="round" fill-opacity="1"><ellipse cx="9" cy="9.5" rx="5" ry="3.8" transform="rotate(-35 9 9.5)" stroke="none"/><path d="M5 10 C2.5 8 3 4 5.5 3.5" fill="none" stroke-width="1.8"/><path d="M6 2.5 C8 1 12 1 13.5 3" fill="none" stroke-width="1.8"/><path d="M5 12.5 L2 13.5 M7.5 13 L7 16.5 M10.5 12.5 L12 16 M13 10 L16.5 11.5 M13.5 7.5 L16.5 6.5" fill="none" stroke-width="1.2"/></g><circle cx="14" cy="3.2" r="1" fill="#f4c8c8"/></svg>
<div class="a" style="left:656px;top:275px;width:173px;height:22px;background:#f5f9fe"></div>
<div class="a" style="left:688px;top:279px;font-size:11.5px;color:#e6e6ea;white-space:nowrap">Window Snip</div>
<!-- scrollbars -->
<div class="a" style="left:1051px;top:150px;width:17px;height:673px;background:#f0f0f0"></div>
<div class="a" style="left:1051px;top:167px;width:17px;height:88px;background:#cdcdcd"></div>
<svg class="a" style="left:1055px;top:155px" width="9" height="6" viewBox="0 0 9 6"><path d="M0.5 5.5 L4.5 1 L8.5 5.5" fill="none" stroke="#9a9a9a" stroke-width="1.1"/></svg>
<svg class="a" style="left:1055px;top:812px" width="9" height="6" viewBox="0 0 9 6"><path d="M0.5 0.5 L4.5 5 L8.5 0.5" fill="none" stroke="#9a9a9a" stroke-width="1.1"/></svg>
<div class="a" style="left:1px;top:823px;width:1050px;height:17px;background:#f0f0f0"></div>
<div class="a" style="left:18px;top:823px;width:416px;height:17px;background:#cdcdcd"></div>
<svg class="a" style="left:6px;top:827px" width="6" height="9" viewBox="0 0 6 9"><path d="M5.5 0.5 L1 4.5 L5.5 8.5" fill="none" stroke="#9a9a9a" stroke-width="1.1"/></svg>
<svg class="a" style="left:1040px;top:827px" width="6" height="9" viewBox="0 0 6 9"><path d="M0.5 0.5 L5 4.5 L0.5 8.5" fill="none" stroke="#9a9a9a" stroke-width="1.1"/></svg>

<div class="a" id="status"></div>
<div class="wm wms" style="left:874px;top:-1px">programy.net<span>.pl</span></div>
<div class="wm wmm" style="left:871px;top:-3.5px;color:#fbfbfb">programy.net<span style="color:#d0e4f8">.pl</span></div>
<div class="wm wms" style="left:7px;top:834px">programy.net<span>.pl</span></div>
<div class="wm wmm" style="left:4px;top:831.5px;color:#b4dbe9">programy.net<span style="color:#a8cce8">.pl</span></div>
<div class="a" style="left:949px;top:15px;width:10px;height:1px;background:#111"></div>
<div class="a" style="left:994px;top:10px;width:10px;height:10px;border:1px solid #111"></div>
<svg class="a" style="left:1039px;top:9px" width="12" height="12" viewBox="0 0 12 12"><path d="M0.5 0.5 L11.5 11.5 M11.5 0.5 L0.5 11.5" stroke="#111" stroke-width="1.1"/></svg>
<div class="a" style="left:4px;top:847px;width:8px;height:18px;background:#0000ee"></div>
</body></html>
